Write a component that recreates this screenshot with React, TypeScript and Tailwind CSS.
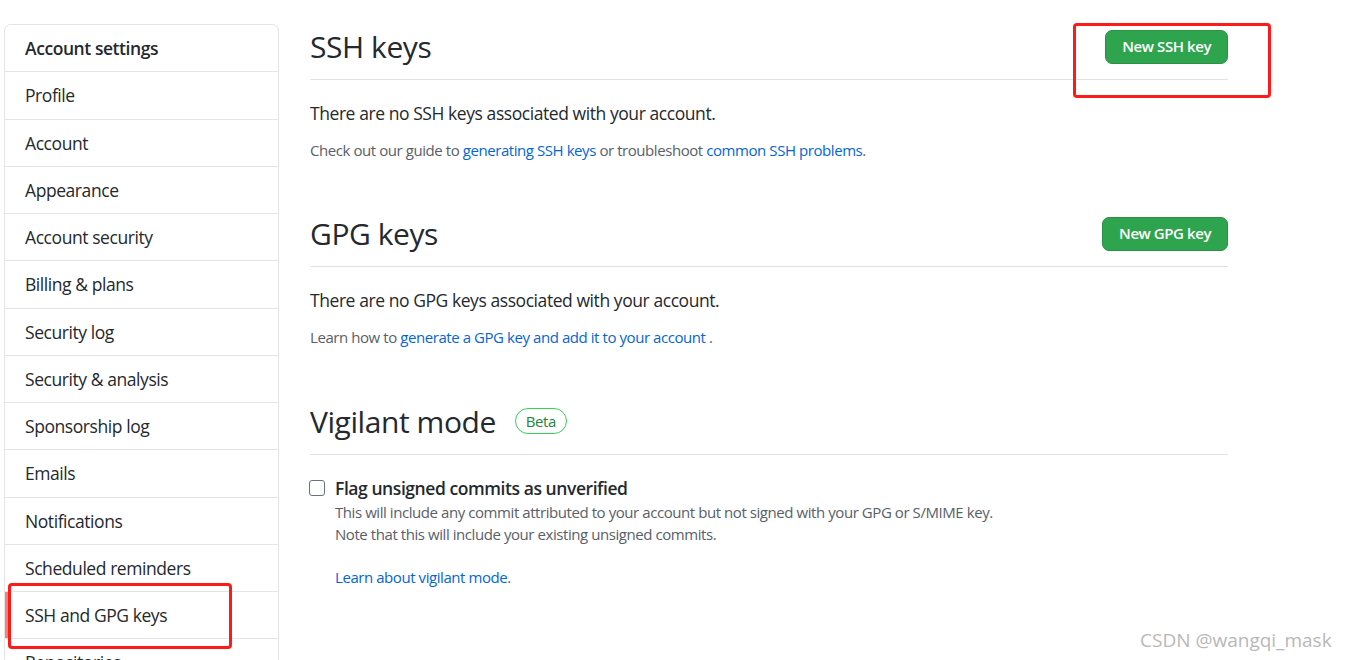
import React from "react";

const navItems = [
  "Profile",
  "Account",
  "Appearance",
  "Account security",
  "Billing & plans",
  "Security log",
  "Security & analysis",
  "Sponsorship log",
  "Emails",
  "Notifications",
  "Scheduled reminders",
  "SSH and GPG keys",
  "Repositories",
  "Packages",
  "Organizations",
];

const font = { fontFamily: '"Segoe UI", "Open Sans", "Noto Sans", sans-serif' };

function Subhead({ title, children }: { title: React.ReactNode; children?: React.ReactNode }) {
  return (
    <div className="flex items-center justify-between pb-[10px] border-b border-[#dfe2e6] mb-[20px]">
      <h2 className="text-[30px] leading-[45px] font-normal text-[#24292e]">{title}</h2>
      {children}
    </div>
  );
}

function GreenButton({ label }: { label: string }) {
  return (
    <button className="h-[34px] px-[16px] rounded-[7px] bg-[#2ea44f] border border-[#2a9147] text-white text-[15px] font-semibold leading-none">
      {label}
    </button>
  );
}

export default function App() {
  return (
    <div className="relative min-h-[660px] bg-white text-[#24292e] tracking-[-0.027em]" style={font}>
      <div className="flex pl-[4px] pt-[24px]">
        {/* sidebar */}
        <nav className="w-[275px] shrink-0 border border-[#e1e4e8] rounded-t-[7px]">
          <div className="px-[20px] py-[10px] leading-[26.25px] text-[17.5px] font-semibold border-b border-[#e1e4e8]">
            Account settings
          </div>
          {navItems.map((item) => {
            const selected = item === "SSH and GPG keys";
            return (
              <div
                key={item}
                className={
                  selected
                    ? "relative px-[20px] py-[10px] leading-[26.25px] text-[17.5px] border-b border-[#e1e4e8]"
                    : "px-[20px] py-[10px] leading-[26.25px] text-[17.5px] border-b border-[#e1e4e8]"
                }
              >
                {selected && <span className="absolute left-0 top-0 bottom-0 w-[3px] bg-[#f9826c]" />}
                {item}
              </div>
            );
          })}
        </nav>

        {/* main */}
        <main className="ml-[31px] w-[918px]">
          <Subhead title="SSH keys">
            <GreenButton label="New SSH key" />
          </Subhead>
          <p className="text-[17.5px] leading-[26.25px]">There are no SSH keys associated with your account.</p>
          <p className="mt-[12.5px] text-[15px] leading-[22.5px] text-[#586069]">
            Check out our guide to <a className="text-[#0366d6]">generating SSH keys</a> or troubleshoot{" "}
            <a className="text-[#0366d6]">common SSH problems</a>.
          </p>

          <div className="mt-[50px]">
            <Subhead title="GPG keys">
              <GreenButton label="New GPG key" />
            </Subhead>
          </div>
          <p className="text-[17.5px] leading-[26.25px]">There are no GPG keys associated with your account.</p>
          <p className="mt-[12.5px] text-[15px] leading-[22.5px] text-[#586069]">
            Learn how to <a className="text-[#0366d6]">generate a GPG key and add it to your account</a> .
          </p>

          <div className="mt-[50px]">
            <Subhead
              title={
                <span className="flex items-center">
                  Vigilant mode
                  <span className="ml-[19px] inline-flex items-center h-[26px] px-[10px] rounded-full border border-[#34d058] text-[#22863a] text-[15px] leading-none">
                    Beta
                  </span>
                </span>
              }
            />
          </div>
          <div className="flex">
            <input
              type="checkbox"
              className="mt-[5px] -ml-px w-[16px] h-[16px] shrink-0 appearance-none border border-[#6a737d] rounded-[3px] bg-white"
            />
            <div className="ml-[10px]">
              <div className="text-[17.5px] leading-[26.25px] font-semibold">Flag unsigned commits as unverified</div>
              <p className="text-[15px] leading-[22.5px] text-[#586069]">
                This will include any commit attributed to your account but not signed with your GPG or S/MIME key.
                <br />
                Note that this will include your existing unsigned commits.
              </p>
              <p className="mt-[20px] text-[15px] leading-[22.5px]">
                <a className="text-[#0366d6]">Learn about vigilant mode</a>
                <span className="text-[#586069]">.</span>
              </p>
            </div>
          </div>
        </main>
      </div>

      {/* annotation boxes */}
      <div className="absolute left-[1073px] top-[23px] w-[198px] h-[75px] border-[3px] border-[#ff1a1a] rounded-[4px] pointer-events-none" />
      <div className="absolute left-[8px] top-[583px] w-[224px] h-[66px] border-[3px] border-[#ff1a1a] rounded-[4px] pointer-events-none" />

      {/* watermark */}
      <div className="absolute left-[1140px] top-[627px] text-[19px] leading-[26px] tracking-normal text-[#b8b8b8] whitespace-nowrap">
        CSDN @wangqi_mask
      </div>
    </div>
  );
}
